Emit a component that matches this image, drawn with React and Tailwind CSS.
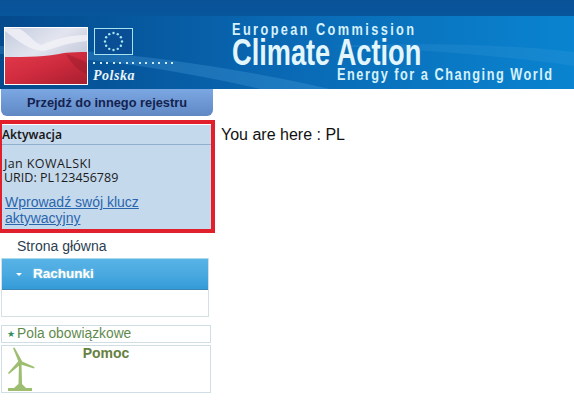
import React from "react";

function Flag() {
  return (
    <svg width="84" height="58" viewBox="0 0 84 58" className="block">
      <defs>
        <linearGradient id="white" x1="0" y1="0" x2="1" y2="1">
          <stop offset="0" stopColor="#c4cbdf" />
          <stop offset="0.4" stopColor="#e2e5ef" />
          <stop offset="0.75" stopColor="#c3c8da" />
          <stop offset="1" stopColor="#d6d9e6" />
        </linearGradient>
        <linearGradient id="red" x1="0" y1="0" x2="1" y2="1">
          <stop offset="0" stopColor="#e43a4c" />
          <stop offset="0.5" stopColor="#cf2b3e" />
          <stop offset="1" stopColor="#a81f2e" />
        </linearGradient>
      </defs>
      <rect width="84" height="58" fill="#fff" />
      <rect x="1" y="1" width="82" height="56" fill="url(#white)" />
      <path d="M1 1 L16 2 C26 8 30 16 38 18 C50 12 66 8 83 8 L83 14 C60 16 50 22 40 24 C26 24 14 14 1 4 Z" fill="#f2f3f8" opacity="0.8" />
      <path d="M1 30 C22 30 44 30 60 26 C68 25 76 25 83 25 L83 57 L1 57 Z" fill="url(#red)" />
      <path d="M62 27 C66 35 74 44 83 47 L83 36 C76 32 70 30 62 27 Z" fill="#8e1a28" opacity="0.4" />
    </svg>
  );
}

function EuFlag() {
  const stars = [];
  for (let i = 0; i < 12; i++) {
    const a = (i * Math.PI) / 6;
    stars.push(<circle key={i} cx={19.5 + 8.5 * Math.cos(a)} cy={13.5 + 8.5 * Math.sin(a)} r="1.2" fill="#a9e6ee" />);
  }
  return (
    <svg width="39" height="27" viewBox="0 0 39 27" className="block">
      <rect x="0.5" y="0.5" width="38" height="26" fill="#0a4f96" stroke="#a6e3f0" />
      {stars}
    </svg>
  );
}

function Turbine() {
  return (
    <svg width="28" height="46" viewBox="0 0 28 46" className="block">
      <g fill="#9dbd70">
        <path d="M1 42 H25 V45 H1 Z" />
        <path d="M12 17 H14.5 L15 38 L19 42 H7 L11.5 38 Z" />
        <path d="M6 2 L7.5 1.5 L15 15 L12 17 Z" />
        <path d="M13 14.5 L27.5 21 L27 22.5 L12 18 Z" />
        <path d="M11.5 15 L14 18 L2 28 L1 27 Z" />
      </g>
    </svg>
  );
}

export default function App() {
  return (
    <div className="w-[574px] h-[413px] bg-white overflow-hidden font-['Liberation_Sans',Arial,sans-serif]">
      {/* header */}
      <div className="h-[89px] flex flex-col bg-[#0a6db8]">
        <div className="h-4 bg-gradient-to-b from-[#0a5298] to-[#07559c]"></div>
        <div className="flex-1 flex relative overflow-hidden bg-gradient-to-r from-[#044a8c] via-[#0a69b4] to-[#0a84d0]">
          <svg width="574" height="73" viewBox="0 0 574 73" className="absolute left-0 top-0">
            <path d="M0 30 C120 34 240 52 330 73 L260 73 C170 52 80 40 0 38 Z" fill="#5ab0e6" opacity="0.25" />
            <path d="M330 30 C420 26 500 28 574 36 L574 50 C490 38 420 34 330 30 Z" fill="#5ab0e6" opacity="0.15" />
          </svg>
          <div className="relative w-[232px] shrink-0 pl-1 pt-[11px] flex gap-[6px]">
            <Flag />
            <div className="pt-[1px]">
              <EuFlag />
              <div className="mt-[7px] flex gap-[4.5px] -ml-[1px]">
                {[...Array(13)].map((_, i) => (
                  <span key={i} className="w-[2px] h-[2px] bg-[#cfeaf5]"></span>
                ))}
              </div>
              <div className="font-['Liberation_Serif',serif] italic font-bold text-[14px] leading-[14px] mt-[5px] -ml-[1px] text-[#e8f4fa] tracking-[0.5px]">Polska</div>
            </div>
          </div>
          <div className="relative pt-[5px] text-[#d5f1fb] font-bold whitespace-nowrap">
            <div className="text-[17px] leading-[18px] tracking-[3.2px] origin-left scale-x-[0.75]">European Commission</div>
            <div className="text-[36px] leading-[30px] -mt-[1px] text-[#e2f6fc] origin-left scale-x-[0.755]">Climate Action</div>
            <div className="text-[17px] leading-[18px] tracking-[2px] ml-[105px] -mt-[2px] origin-left scale-x-[0.75]">Energy for a Changing World</div>
          </div>
        </div>
      </div>

      <div className="flex">
        {/* sidebar */}
        <div className="w-[215px] shrink-0">
          <div className="ml-[1px] w-[212px] h-[27px] rounded-b-md bg-gradient-to-b from-[#7ba7e2] to-[#6089c4] flex items-center justify-center text-[12.8px] font-bold text-[#14224f]">
            Przejdź do innego rejestru
          </div>
          <div className="mt-1 h-[113px] border-4 border-[#e2202c] border-l-[2px] bg-[#c5d9ec]">
            <div className="h-[21px] border-t border-white border-b border-b-[#8fb0cf] flex items-center font-['Noto_Sans',sans-serif] text-[12px] font-semibold text-[#1a1a1a] leading-none">
              Aktywacja
            </div>
            <div className="pl-[2px] mt-[12px] font-['Open_Sans',sans-serif] text-[12.5px] leading-[14px] text-[#1c1c1c]">
              <div className="tracking-[0.4px]">Jan KOWALSKI</div>
              <div>URID: PL123456789</div>
            </div>
            <div className="pl-[3px] mt-[9px] text-[14px] leading-[16px] text-[#2a66ad] underline">
              Wprowadź swój klucz<br />aktywacyjny
            </div>
          </div>

          <div className="pl-[17px] mt-[5px] h-[17px] text-[14px] leading-[17px] text-[#2c3e50]">Strona główna</div>

          <div className="ml-[1px] mt-[3px] w-[208px] h-[59px] border border-[#d5e0e6] bg-white">
            <div className="h-[32px] -mt-[1px] flex items-center pl-[14px] gap-[11px] bg-gradient-to-b from-[#58b3e6] via-[#4aa9e0] to-[#339bd8] border-t border-[#a8dcea] border-b border-b-[#3a87b5]">
              <span className="w-0 h-0 border-x-[3px] border-x-transparent border-t-[3px] border-t-white"></span>
              <span className="text-white text-[13.5px] font-bold [text-shadow:0_0_2px_#a8dcea]">Rachunki</span>
            </div>
          </div>

          <div className="ml-[1px] mt-[8px] w-[210px] h-[18px] border border-[#cfdde4] flex items-center pl-[5px] gap-[2px] text-[13.8px] text-[#5f8a4e]">
            <span className="text-[9px] leading-none text-[#2f8f62]">★</span>
            <span className="leading-none">Pola obowiązkowe</span>
          </div>
          <div className="ml-[1px] mt-[2px] w-[210px] h-[48px] border border-[#cfdde4] relative text-center">
            <div className="absolute left-[5px] top-0"><Turbine /></div>
            <div className="text-[14px] font-bold leading-[15px] text-[#66803f]">Pomoc</div>
          </div>
        </div>
        {/* content */}
        <div className="pl-[6px] pt-[36px] text-[16px] leading-[20px] text-[#111]">You are here : PL</div>
      </div>
    </div>
  );
}
